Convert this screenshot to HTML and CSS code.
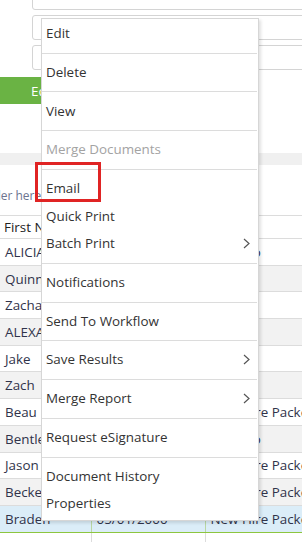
FILE: index.html
```html
<!DOCTYPE html>
<html lang="en">
<head>
    <meta charset="UTF-8">
    <meta name="viewport" content="width=device-width, initial-scale=1.0">
    <title>Search Results</title>
    <link rel="stylesheet" href="styles.css">
</head>
<body>
    <div class="page">
        <div class="filters">
            <input class="filter-input" type="text">
            <input class="filter-input" type="text">
            <input class="filter-input" type="text">
        </div>

        <button class="btn-green">Edit Search</button>

        <div class="grid">
            <div class="grid-toolbar"></div>
            <div class="group-panel">Drag a column header here to group by that column</div>
            <table class="grid-table">
                <colgroup>
                    <col class="col-first">
                    <col class="col-dob">
                    <col class="col-package">
                </colgroup>
                <thead>
                    <tr>
                        <th>First Name</th>
                        <th>Birth Date</th>
                        <th>Type</th>
                    </tr>
                </thead>
                <tbody>
                    <tr><td>ALICIA</td><td>02/14/1998</td><td>Pay Info</td></tr>
                    <tr class="alt"><td>Quinn</td><td>11/03/2001</td><td>Release</td></tr>
                    <tr><td>Zachary</td><td>07/22/1999</td><td>W-4</td></tr>
                    <tr class="alt"><td>ALEXANDER</td><td>03/09/2002</td><td>I-9</td></tr>
                    <tr><td>Jake</td><td>09/30/2000</td><td>W-4</td></tr>
                    <tr class="alt"><td>Zach</td><td>12/12/1997</td><td>I-9</td></tr>
                    <tr><td>Beau</td><td>04/18/2001</td><td>New Hire Packet</td></tr>
                    <tr class="alt"><td>Bentley</td><td>06/05/1999</td><td>Pay Info</td></tr>
                    <tr><td>Jason</td><td>08/27/2000</td><td>New Hire Packet</td></tr>
                    <tr class="alt"><td>Beckett</td><td>01/16/2002</td><td>New Hire Packet</td></tr>
                    <tr class="selected"><td>Braden</td><td>05/01/2000</td><td>New Hire Packet</td></tr>
                    <tr><td></td><td></td><td></td></tr>
                </tbody>
            </table>
        </div>
    </div>

    <!-- row context menu -->
    <div class="context-menu">
        <div class="menu-item">Edit</div>
        <div class="menu-sep"></div>
        <div class="menu-item">Delete</div>
        <div class="menu-sep"></div>
        <div class="menu-item">View</div>
        <div class="menu-sep"></div>
        <div class="menu-item disabled">Merge Documents</div>
        <div class="menu-sep"></div>
        <div class="menu-item">Email</div>
        <div class="menu-item">Quick Print</div>
        <div class="menu-item has-sub">Batch Print
            <svg class="chevron" width="7" height="11" viewBox="0 0 7 11"><polyline points="1,1 6,5.5 1,10" fill="none" stroke="#555" stroke-width="1.2"/></svg>
        </div>
        <div class="menu-sep"></div>
        <div class="menu-item">Notifications</div>
        <div class="menu-sep"></div>
        <div class="menu-item">Send To Workflow</div>
        <div class="menu-sep"></div>
        <div class="menu-item has-sub">Save Results
            <svg class="chevron" width="7" height="11" viewBox="0 0 7 11"><polyline points="1,1 6,5.5 1,10" fill="none" stroke="#555" stroke-width="1.2"/></svg>
        </div>
        <div class="menu-sep"></div>
        <div class="menu-item has-sub">Merge Report
            <svg class="chevron" width="7" height="11" viewBox="0 0 7 11"><polyline points="1,1 6,5.5 1,10" fill="none" stroke="#555" stroke-width="1.2"/></svg>
        </div>
        <div class="menu-sep"></div>
        <div class="menu-item">Request eSignature</div>
        <div class="menu-sep"></div>
        <div class="menu-item">Document History</div>
        <div class="menu-item">Properties</div>
    </div>

    <div class="highlight-box"></div>
</body>
</html>
```

FILE: styles.css
```css
body {
    margin: 0;
    font-family: "Open Sans", "Noto Sans", sans-serif;
    font-size: 13.4px;
    color: #333;
    background: #fff;
    overflow: hidden;
}

.page {
    width: 302px;
    height: 542px;
    overflow: hidden;
}

/* search filters */
.filters {
    margin-top: -15px;
    padding-left: 32px;
}

.filter-input {
    display: block;
    box-sizing: border-box;
    width: 300px;
    height: 25px;
    margin: 0 0 5px 0;
    border: 1px solid #d4d4d4;
    border-radius: 3px;
    background: #fff;
}

.btn-green {
    display: block;
    box-sizing: border-box;
    width: 150px;
    height: 27px;
    margin-top: 7px;
    padding: 0 0 0 31px;
    border: none;
    background: #6ab344;
    color: #fff;
    font-family: inherit;
    font-size: 13.4px;
    text-align: left;
}

/* results grid */
.grid {
    margin-top: 49px;
}

.grid-toolbar {
    height: 12px;
    background: #f0f0f0;
}

.group-panel {
    box-sizing: border-box;
    height: 50px;
    padding-top: 21px;
    line-height: 20px;
    font-size: 12px;
    color: #6b7590;
    white-space: nowrap;
    text-indent: -112px;
}

.grid-table {
    table-layout: fixed;
    width: 420px;
    border-collapse: collapse;
    border-top: 1px solid #dcdcdc;
}

.col-first { width: 91px; }
.col-dob { width: 114px; }

.grid-table th {
    height: 22px;
    padding: 0 0 0 4px;
    text-align: left;
    font-weight: normal;
    color: #222;
    border-bottom: 1px solid #dcdcdc;
    border-left: 1px solid #dcdcdc;
    white-space: nowrap;
    overflow: hidden;
}

.grid-table td {
    height: 25.7px;
    padding: 0 0 0 5px;
    color: #30334a;
    border-bottom: 1px solid #dcdcdc;
    border-left: 1px solid #dcdcdc;
    white-space: nowrap;
    overflow: hidden;
}

.grid-table th:first-child,
.grid-table td:first-child {
    border-left: none;
}

.grid-table tr.alt td {
    background: #f2f2f2;
}

.grid-table tr.selected td {
    background: #dbedf8;
    border-bottom-color: #8dc63f;
    border-left-color: #b9d7a4;
}

/* context menu over the grid */
.context-menu {
    position: absolute;
    left: 41px;
    top: 18px;
    box-sizing: border-box;
    width: 218px;
    padding: 1px 1px 2px 0;
    background: #fff;
    border: 1px solid #d6d6d6;
    box-shadow: 2px 2px 3px rgba(0, 0, 0, 0.12);
}

.menu-item {
    position: relative;
    height: 27.5px;
    line-height: 27.5px;
    padding-left: 4px;
    color: #333;
    white-space: nowrap;
}

.menu-item.disabled {
    color: #a3a3a3;
}

.menu-item .chevron {
    position: absolute;
    right: 7px;
    top: 8px;
}

.menu-sep {
    height: 1px;
    margin: 5.15px 0;
    background: #dcdcdc;
}

.highlight-box {
    position: absolute;
    left: 35px;
    top: 162px;
    width: 66px;
    height: 40px;
    box-sizing: border-box;
    border: 3px solid #e02424;
}
```
